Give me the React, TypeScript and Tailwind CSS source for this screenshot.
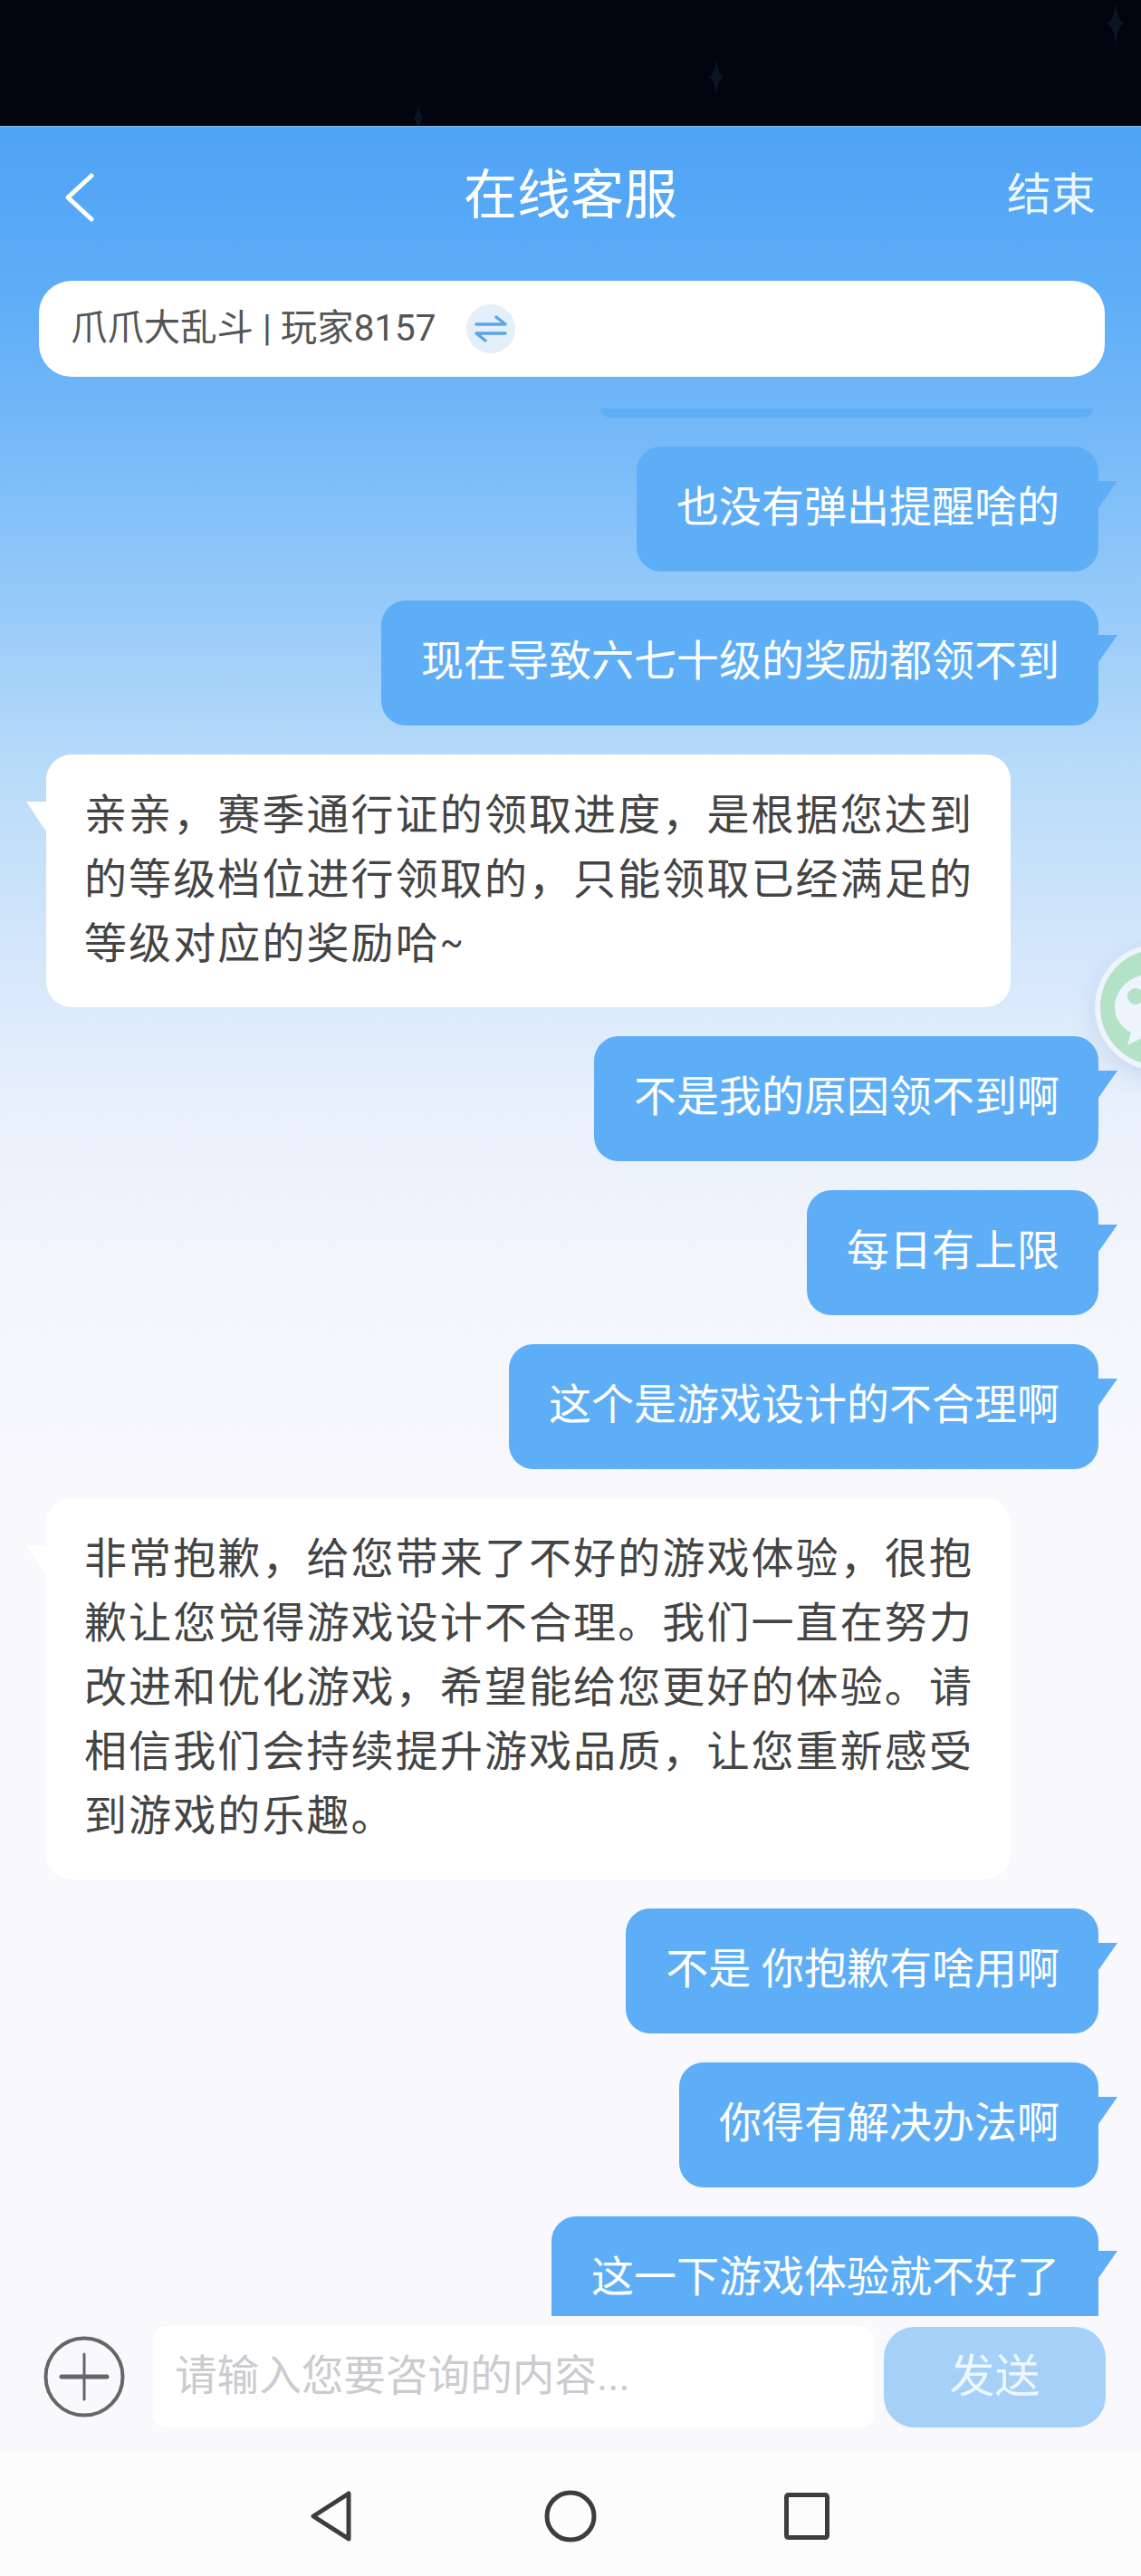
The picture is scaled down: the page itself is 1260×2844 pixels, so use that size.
const FONT = 'font-["Roboto","Noto_Sans_CJK_SC",sans-serif]';

function Star({ x, y, s }: { x: number; y: number; s: number }) {
  return (
    <path
      d={`M${x} ${y - s}Q${x + 2} ${y - 3} ${x + s / 2.5} ${y}Q${x + 2} ${y + 3} ${x} ${y + s}Q${x - 2} ${y + 3} ${x - s / 2.5} ${y}Q${x - 2} ${y - 3} ${x} ${y - s}Z`}
      fill="#0a1520"
    />
  );
}

function Right({ children, clip }: { children: React.ReactNode; clip?: boolean }) {
  return (
    <div className="relative self-end shrink-0">
      <div className={`bg-[#5eaef7] text-white text-[47px] leading-[72px] pl-[44px] pr-[43px] pt-[31px] pb-[35px] whitespace-nowrap rounded-[27px] ${clip ? "rounded-b-none" : ""}`}>
        {children}
      </div>
      <svg className="absolute left-full top-[38px]" width="21" height="30" viewBox="0 0 21 30">
        <path d="M0 0H21L0 30Z" fill="#5eaef7" />
      </svg>
    </div>
  );
}

function Left({ lines }: { lines: React.ReactNode[] }) {
  return (
    <div className="relative self-start shrink-0 ml-[8px]">
      <div className="w-[1065px] bg-white text-[#444444] text-[47px] tracking-[2.1px] leading-[71px] pl-[42px] pt-[31px] pb-[35px] rounded-[28px]">
        {lines.map((l, i) => (
          <div key={i} className="h-[71px] whitespace-nowrap">{l}</div>
        ))}
      </div>
      <svg className="absolute right-full top-[52px]" width="22" height="33" viewBox="0 0 22 33">
        <path d="M0 0H22V33Z" fill="#ffffff" />
      </svg>
    </div>
  );
}

export default function App() {
  return (
    <div className={`relative w-[1260px] h-[2844px] overflow-hidden flex flex-col bg-[#fcfcfd] ${FONT}`}>
      <div className="h-[139px] shrink-0 bg-[#02040f]">
        <svg width="1260" height="139" viewBox="0 0 1260 139">
          <Star x={791} y={85} s={20} />
          <Star x={462} y={130} s={14} />
          <Star x={1232} y={26} s={24} />
        </svg>
      </div>

      <div className="h-[2569px] shrink-0 flex flex-col border-t border-[#8ab6e0] bg-[linear-gradient(180deg,#4fa3f6_0px,#5dacf7_170px,#73b8f8_330px,#9ccdf9_560px,#b5daf9_690px,#d3e6fb_900px,#e8f0fb_1080px,#f2f5fc_1260px,#f8f8fd_1500px,#f8f8fd_100%)]">
        <div className="h-[170px] shrink-0 grid grid-cols-[1fr_auto_1fr] items-start px-[52px] pt-[36px]">
          <svg className="mt-[15px] ml-[18px]" width="34" height="54" viewBox="0 0 34 54" fill="none">
            <path d="M31 3L5 27L31 51" stroke="#ffffff" strokeWidth="5" strokeLinecap="round" strokeLinejoin="round" />
          </svg>
          <div className="text-white text-[59px] leading-[80px]">在线客服</div>
          <div className="justify-self-end text-[#ecf6ff] text-[49px] leading-[72px] mt-[4px] -mr-[2px]">结束</div>
        </div>

        <div className="mx-[43px] w-[1177px] h-[106px] shrink-0 bg-white rounded-[36px] flex items-center pl-[35px]">
          <span className="text-[#555555] text-[40.4px] leading-[60px] whitespace-nowrap">爪爪大乱斗 | 玩家8157</span>
          <span className="ml-[34px] w-[54px] h-[54px] rounded-full bg-[#e3eff9] flex items-center justify-center">
            <svg width="36" height="32" viewBox="0 0 36 32" fill="none" stroke="#5aa6e6" strokeWidth="3.5" strokeLinecap="round" strokeLinejoin="round">
              <path d="M2 11H34L24 3" />
              <path d="M34 21H2L12 29" />
            </svg>
          </span>
        </div>

        <div className="mt-[35px] h-[2106px] shrink-0 overflow-hidden flex flex-col gap-[32px] pl-[43px] pr-[47px]">
          <div className="self-end shrink-0 w-[544px] h-[10px] -mr-[-6px] bg-[#5eaef7] rounded-b-[22px]" />
          <Right>也没有弹出提醒啥的</Right>
          <Right>现在导致六七十级的奖励都领不到</Right>
          <Left lines={["亲亲，赛季通行证的领取进度，是根据您达到", "的等级档位进行领取的，只能领取已经满足的", <>等级对应的奖励哈<span className="text-[38px] leading-[0] align-[4px]">~</span></>]} />
          <Right>不是我的原因领不到啊</Right>
          <Right>每日有上限</Right>
          <Right>这个是游戏设计的不合理啊</Right>
          <Left lines={["非常抱歉，给您带来了不好的游戏体验，很抱", "歉让您觉得游戏设计不合理。我们一直在努力", "改进和优化游戏，希望能给您更好的体验。请", "相信我们会持续提升游戏品质，让您重新感受", "到游戏的乐趣。"]} />
          <Right>不是 你抱歉有啥用啊</Right>
          <Right>你得有解决办法啊</Right>
          <Right clip>这一下游戏体验就不好了</Right>
        </div>

        <div className="mt-[11px] h-[112px] shrink-0 flex items-center pl-[48px]">
          <svg width="90" height="90" viewBox="0 0 90 90" fill="none" className="shrink-0">
            <circle cx="45" cy="45" r="42.5" stroke="#666666" strokeWidth="4" />
            <path d="M45 20V70" stroke="#666666" strokeWidth="3" strokeLinecap="round" />
            <path d="M20 45H70" stroke="#666666" strokeWidth="5" strokeLinecap="round" />
          </svg>
          <div className="ml-[31px] w-[796px] h-[112px] bg-white rounded-[14px] flex items-center pl-[24px] text-[#cbcbd0] text-[46.6px] whitespace-nowrap">请输入您要咨询的内容...</div>
          <div className="ml-[11px] w-[245px] h-[111px] bg-[#a5d1f9] rounded-[34px] flex items-center justify-center text-[#eef7ff] text-[50px]">发送</div>
        </div>
      </div>

      <div className="flex-1 flex items-center pl-[341px] pt-[3px]">
        <svg width="48" height="58" viewBox="0 0 48 58" fill="none" className="shrink-0">
          <path d="M44 4V54L5 29Z" stroke="#3d3d3d" strokeWidth="5" strokeLinejoin="round" />
        </svg>
        <svg width="58" height="58" viewBox="0 0 58 58" fill="none" className="shrink-0 ml-[212px]">
          <circle cx="29" cy="29" r="26" stroke="#3d3d3d" strokeWidth="5" />
        </svg>
        <svg width="50" height="52" viewBox="0 0 50 52" fill="none" className="shrink-0 ml-[207px]">
          <rect x="2.5" y="2.5" width="45" height="47" rx="2" stroke="#3d3d3d" strokeWidth="5" />
        </svg>
      </div>

      <div className="absolute left-[1209px] top-[1042px] w-[140px] h-[140px] rounded-full bg-[#eef3fd] shadow-[0_8px_24px_rgba(120,150,200,0.25)] flex items-center justify-center">
        <div className="w-[128px] h-[128px] rounded-full bg-[#b3e2c6] relative">
          <svg className="absolute left-[16px] top-[26px]" width="100" height="86" viewBox="0 0 100 86">
            <path d="M45 0C20 0 0 17 0 38C0 50 7 60 18 66L14 80L30 72C35 74 40 75 45 75C70 75 90 58 90 38C90 17 70 0 45 0Z" fill="#eef4fd" />
            <circle cx="23" cy="26" r="9" fill="#b3e2c6" />
          </svg>
        </div>
      </div>
    </div>
  );
}
